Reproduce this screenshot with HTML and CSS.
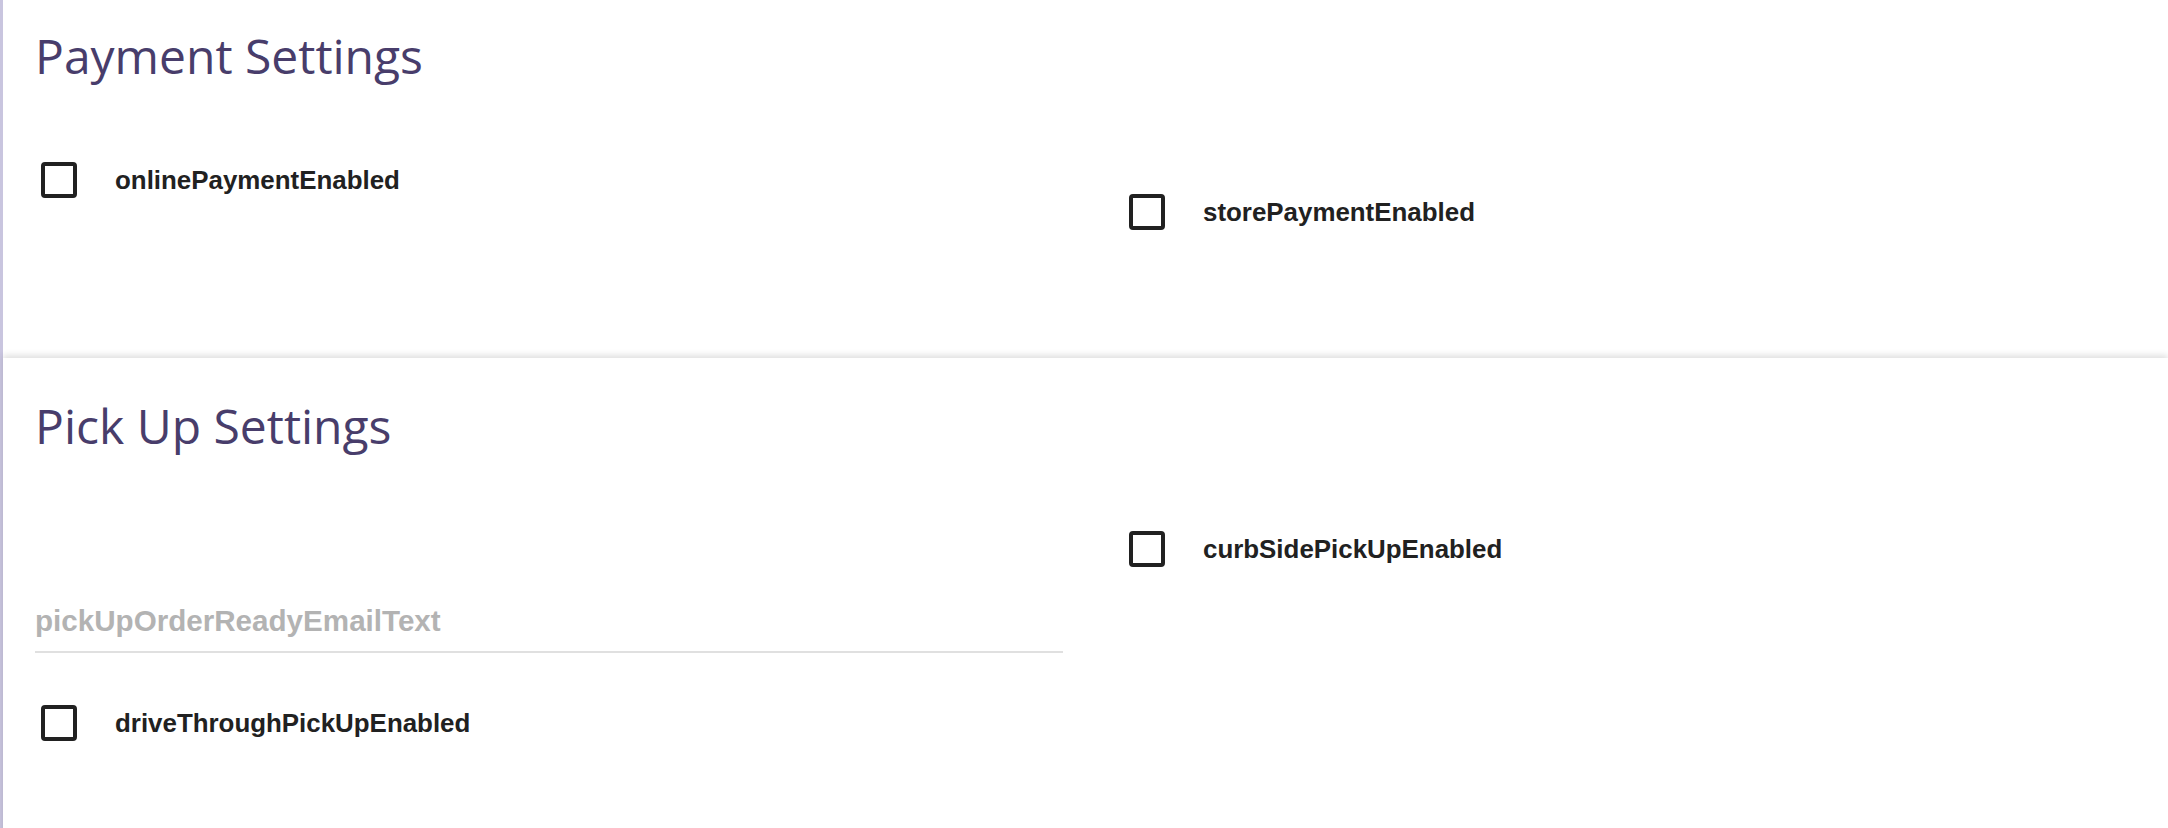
FILE: index.html
```html
<!DOCTYPE html>
<html lang="en">
<head>
    <meta charset="UTF-8">
    <meta name="viewport" content="width=device-width, initial-scale=1.0">
    <title>Settings</title>
    <link rel="stylesheet" href="styles.css">
</head>
<body>
    <div class="page">
        <section class="card card-payment">
            <h2 class="card-title">Payment Settings</h2>
            <div class="settings-grid">
                <label class="check-row online">
                    <span class="box"></span>
                    <span class="check-label">onlinePaymentEnabled</span>
                </label>
                <label class="check-row store">
                    <span class="box"></span>
                    <span class="check-label">storePaymentEnabled</span>
                </label>
            </div>
        </section>

        <section class="card card-pickup">
            <h2 class="card-title">Pick Up Settings</h2>
            <div class="settings-grid">
                <div class="col">
                    <input class="text-field" type="text" placeholder="pickUpOrderReadyEmailText">
                    <label class="check-row drive">
                        <span class="box"></span>
                        <span class="check-label">driveThroughPickUpEnabled</span>
                    </label>
                </div>
                <div class="col">
                    <label class="check-row curb">
                        <span class="box"></span>
                        <span class="check-label">curbSidePickUpEnabled</span>
                    </label>
                </div>
            </div>
        </section>
    </div>
</body>
</html>
```

FILE: styles.css
```css
html, body {
    margin: 0;
    height: 100%;
    overflow: hidden;
    background: #fff;
}
body {
    font-family: "Liberation Sans", Arial, sans-serif;
    color: #212121;
}
.page {
    border-left: 3px solid #c9c5df;
    min-height: 100%;
}
.card {
    background: #fff;
    padding: 28px 17px 0 32px;
    box-shadow: 0 -3px 6px rgba(0, 0, 0, 0.12);
}
.card-payment {
    padding-bottom: 127px;
    box-shadow: none;
}
.card-pickup {
    margin-top: 1px;
    padding-top: 40px;
    padding-bottom: 200px;
}
.card-title {
    margin: 0;
    font-family: "Open Sans", sans-serif;
    font-weight: 400;
    font-size: 48px;
    line-height: 56px;
    color: #483d6b;
}
.settings-grid {
    display: grid;
    grid-template-columns: 1fr 1fr;
    column-gap: 60px;
    align-items: start;
}
.check-row {
    display: flex;
    align-items: center;
    gap: 38px;
    padding-left: 6px;
    cursor: pointer;
}
.box {
    box-sizing: border-box;
    width: 36px;
    height: 36px;
    flex: none;
    border: 4.5px solid #212121;
    border-radius: 4px;
}
.check-label {
    font-weight: bold;
    font-size: 25.9px;
    line-height: 30px;
    color: #212121;
}
.online { margin-top: 78px; }
.store { margin-top: 110px; }
.curb { margin-top: 77px; }
.text-field {
    display: block;
    box-sizing: content-box;
    width: 100%;
    height: 60px;
    margin: 137px 0 0;
    padding: 0;
    border: none;
    border-bottom: 2px solid #e0e0e0;
    outline: none;
    font-family: "Liberation Sans", Arial, sans-serif;
    font-weight: bold;
    font-size: 29.6px;
    color: #212121;
    background: transparent;
}
.text-field::placeholder {
    color: #b3b3b3;
}
.drive { margin-top: 52px; }
```
